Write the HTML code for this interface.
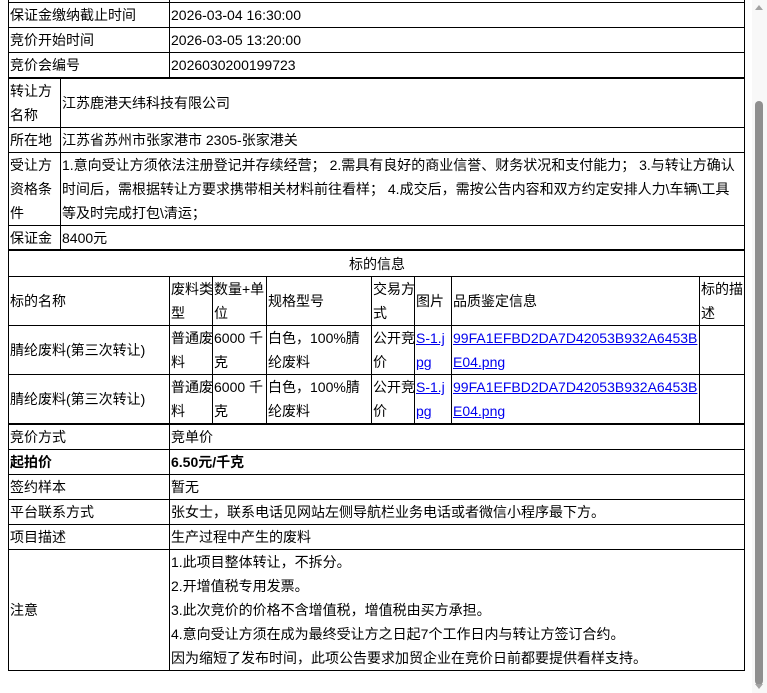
<!DOCTYPE html>
<html><head><meta charset="utf-8"><style>
body{margin:0;width:767px;height:693px;overflow:hidden;background:#fff;font-family:"Liberation Sans","Noto Sans CJK SC",sans-serif;font-size:14px;color:#000;position:relative}
.c{position:absolute;box-sizing:border-box;border:1px solid #000;display:flex;align-items:center;padding-left:1px;line-height:24px;overflow:hidden;white-space:nowrap}
.k{position:absolute;background:#000}
a{color:#00e;text-decoration:underline}
b{font-weight:bold}
</style></head><body>
<div class="c" style="left:8px;top:-23px;width:162px;height:26px"></div>
<div class="c" style="left:169px;top:-23px;width:576px;height:26px"></div>
<div class="c" style="left:8px;top:2px;width:162px;height:26px">保证金缴纳截止时间</div>
<div class="c" style="left:169px;top:2px;width:576px;height:26px">2026-03-04 16:30:00</div>
<div class="c" style="left:8px;top:27px;width:162px;height:26px">竞价开始时间</div>
<div class="c" style="left:169px;top:27px;width:576px;height:26px">2026-03-05 13:20:00</div>
<div class="c" style="left:8px;top:52px;width:162px;height:26px">竞价会编号</div>
<div class="c" style="left:169px;top:52px;width:576px;height:26px">2026030200199723</div>
<div class="k" style="left:8px;top:77px;width:737px;height:2px"></div>
<div class="c" style="left:8px;top:78px;width:53px;height:50px">转让方<br>名称</div>
<div class="c" style="left:60px;top:78px;width:685px;height:50px">江苏鹿港天纬科技有限公司</div>
<div class="c" style="left:8px;top:127px;width:53px;height:26px">所在地</div>
<div class="c" style="left:60px;top:127px;width:685px;height:26px">江苏省苏州市张家港市 2305-张家港关</div>
<div class="c" style="left:8px;top:152px;width:53px;height:74px">受让方<br>资格条<br>件</div>
<div class="c" style="left:60px;top:152px;width:685px;height:74px">1.意向受让方须依法注册登记并存续经营； 2.需具有良好的商业信誉、财务状况和支付能力； 3.与转让方确认<br>时间后，需根据转让方要求携带相关材料前往看样； 4.成交后，需按公告内容和双方约定安排人力\车辆\工具<br>等及时完成打包\清运；</div>
<div class="c" style="left:8px;top:225px;width:53px;height:26px">保证金</div>
<div class="c" style="left:60px;top:225px;width:685px;height:26px">8400元</div>
<div class="k" style="left:8px;top:249px;width:737px;height:2px"></div>
<div class="c" style="left:8px;top:250px;width:737px;height:27px;justify-content:center">标的信息</div>
<div class="c" style="left:8px;top:276px;width:162px;height:50px">标的名称</div>
<div class="c" style="left:169px;top:276px;width:44px;height:50px">废料类<br>型</div>
<div class="c" style="left:212px;top:276px;width:55px;height:50px">数量+单<br>位</div>
<div class="c" style="left:266px;top:276px;width:106px;height:50px">规格型号</div>
<div class="c" style="left:371px;top:276px;width:44px;height:50px">交易方<br>式</div>
<div class="c" style="left:414px;top:276px;width:38px;height:50px">图片</div>
<div class="c" style="left:451px;top:276px;width:249px;height:50px">品质鉴定信息</div>
<div class="c" style="left:699px;top:276px;width:46px;height:50px">标的描<br>述</div>

<div class="c" style="left:8px;top:325px;width:162px;height:50px">腈纶废料(第三次转让)</div>
<div class="c" style="left:169px;top:325px;width:44px;height:50px">普通废<br>料</div>
<div class="c" style="left:212px;top:325px;width:55px;height:50px">6000 千<br>克</div>
<div class="c" style="left:266px;top:325px;width:106px;height:50px">白色，100%腈<br>纶废料</div>
<div class="c" style="left:371px;top:325px;width:44px;height:50px">公开竞<br>价</div>
<div class="c" style="left:414px;top:325px;width:38px;height:50px"><a>S-1.j<br>pg</a></div>
<div class="c" style="left:451px;top:325px;width:249px;height:50px"><a>99FA1EFBD2DA7D42053B932A6453B<br>E04.png</a></div>
<div class="c" style="left:699px;top:325px;width:46px;height:50px"></div>

<div class="c" style="left:8px;top:374px;width:162px;height:50px">腈纶废料(第三次转让)</div>
<div class="c" style="left:169px;top:374px;width:44px;height:50px">普通废<br>料</div>
<div class="c" style="left:212px;top:374px;width:55px;height:50px">6000 千<br>克</div>
<div class="c" style="left:266px;top:374px;width:106px;height:50px">白色，100%腈<br>纶废料</div>
<div class="c" style="left:371px;top:374px;width:44px;height:50px">公开竞<br>价</div>
<div class="c" style="left:414px;top:374px;width:38px;height:50px"><a>S-1.j<br>pg</a></div>
<div class="c" style="left:451px;top:374px;width:249px;height:50px"><a>99FA1EFBD2DA7D42053B932A6453B<br>E04.png</a></div>
<div class="c" style="left:699px;top:374px;width:46px;height:50px"></div>
<div class="k" style="left:8px;top:423px;width:737px;height:2px"></div>
<div class="c" style="left:8px;top:424px;width:162px;height:26px">竞价方式</div>
<div class="c" style="left:169px;top:424px;width:576px;height:26px">竞单价</div>
<div class="c" style="left:8px;top:449px;width:162px;height:26px"><b>起拍价</b></div>
<div class="c" style="left:169px;top:449px;width:576px;height:26px"><b>6.50元/千克</b></div>
<div class="c" style="left:8px;top:474px;width:162px;height:26px">签约样本</div>
<div class="c" style="left:169px;top:474px;width:576px;height:26px">暂无</div>
<div class="c" style="left:8px;top:499px;width:162px;height:26px">平台联系方式</div>
<div class="c" style="left:169px;top:499px;width:576px;height:26px">张女士，联系电话见网站左侧导航栏业务电话或者微信小程序最下方。</div>
<div class="c" style="left:8px;top:524px;width:162px;height:26px">项目描述</div>
<div class="c" style="left:169px;top:524px;width:576px;height:26px">生产过程中产生的废料</div>
<div class="c" style="left:8px;top:549px;width:162px;height:122px">注意</div>
<div class="c" style="left:169px;top:549px;width:576px;height:122px">1.此项目整体转让，不拆分。<br>2.开增值税专用发票。<br>3.此次竞价的价格不含增值税，增值税由买方承担。<br>4.意向受让方须在成为最终受让方之日起7个工作日内与转让方签订合约。<br>因为缩短了发布时间，此项公告要求加贸企业在竞价日前都要提供看样支持。</div>
<div style="position:absolute;left:752px;top:0;width:15px;height:693px;background:#f8f8f8"></div>
<div style="position:absolute;left:755px;top:5px;width:0;height:0;border-left:4px solid transparent;border-right:4px solid transparent;border-bottom:5px solid #a3a3a3"></div>
<div style="position:absolute;left:755px;top:101px;width:8px;height:584px;background:#8f8f8f;border-radius:4px"></div>
<div style="position:absolute;left:755px;top:684px;width:0;height:0;border-left:4px solid transparent;border-right:4px solid transparent;border-top:5px solid #a3a3a3"></div>
</body></html>
